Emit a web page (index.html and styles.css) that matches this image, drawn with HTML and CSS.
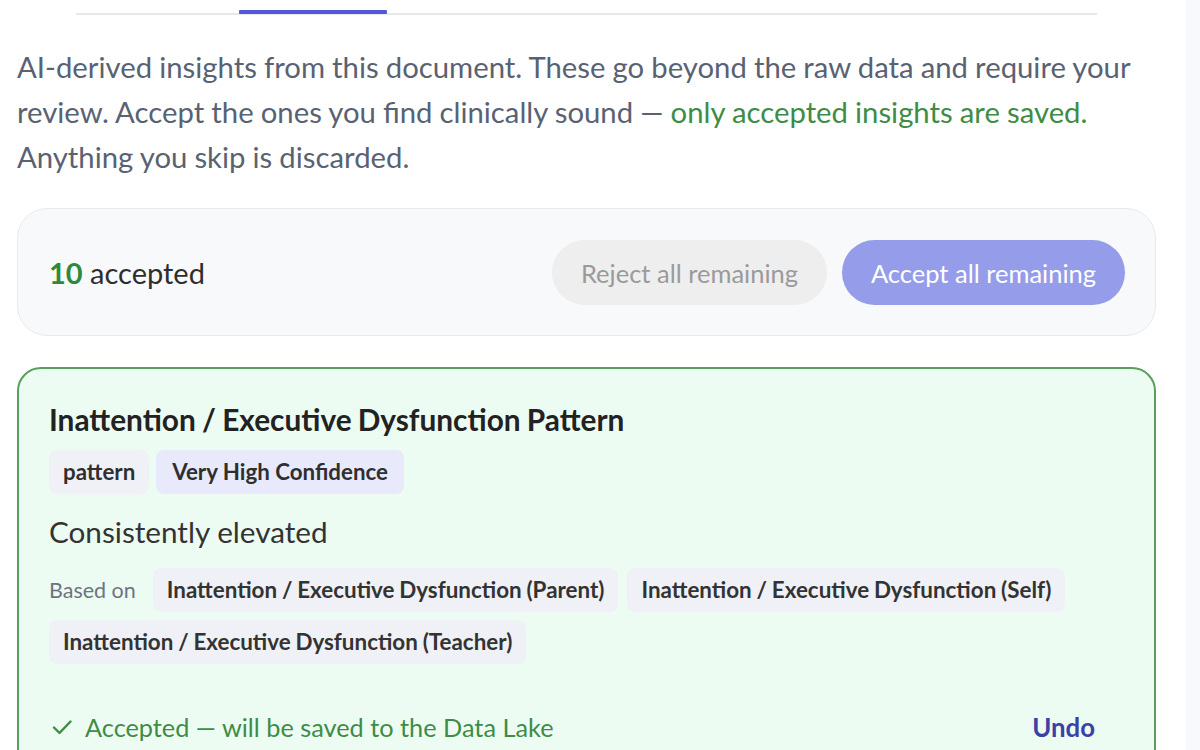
FILE: index.html
```html
<!DOCTYPE html>
<html lang="en">
<head>
<meta charset="utf-8">
<title>Insights review</title>
<link rel="stylesheet" href="styles.css">
</head>
<body>
<div class="page">
  <main class="main">
    <div class="tabs">
      <div class="tab"></div>
      <div class="tab active"></div>
    </div>
    <p class="intro">AI-derived insights from this document. These go beyond the raw data and require your review. Accept the ones you find clinically sound — <span class="ok">only accepted insights are saved.</span> Anything you skip is discarded.</p>

    <section class="summary">
      <div class="count"><strong>10</strong> accepted</div>
      <div class="actions">
        <button class="btn btn-reject">Reject all remaining</button>
        <button class="btn btn-accept">Accept all remaining</button>
      </div>
    </section>

    <article class="card">
      <h2 class="card-title">Inattention / Executive Dysfunction Pattern</h2>
      <div class="tags">
        <span class="tag">pattern</span>
        <span class="tag tag-conf">Very High Confidence</span>
      </div>
      <p class="finding">Consistently elevated</p>
      <div class="based">
        <span class="based-label">Based on</span>
        <span class="chip">Inattention / Executive Dysfunction (Parent)</span>
        <span class="chip">Inattention / Executive Dysfunction (Self)</span>
        <span class="chip">Inattention / Executive Dysfunction (Teacher)</span>
      </div>
      <div class="card-foot">
        <span class="status"><svg class="check" viewBox="0 0 20 16" width="20" height="16" aria-hidden="true"><path d="M2 8.5 L7.5 14 L18.5 2.5" fill="none" stroke="#3e8c45" stroke-width="2.4" stroke-linecap="round" stroke-linejoin="round"/></svg>Accepted — will be saved to the Data Lake</span>
        <button class="undo">Undo</button>
      </div>
    </article>
  </main>
  <aside class="rail"></aside>
</div>
</body>
</html>
```

FILE: styles.css
```css
* { box-sizing: border-box; }
html, body { margin: 0; padding: 0; background: #ffffff; }
body {
  font-family: Lato, "Noto Sans", "Liberation Sans", sans-serif;
  color: #2b2b2b;
  overflow: hidden;
  height: 750px;
}
.page {
  display: flex;
  height: 750px;
}
.main {
  flex: 1;
  padding: 0 30px 0 17px;
}
.rail {
  width: 14px;
  background: #f8f9fc;
}
.tabs {
  margin: 10px 59px 0 59px;
  height: 5px;
  border-bottom: 2px solid #e8e8ea;
  display: flex;
  padding-left: 163px;
}
.tab.active {
  width: 148px;
  height: 4px;
  background: #5557d8;
  border-radius: 1px;
}
.intro {
  margin: 29px 0 0 0;
  font-size: 29.3px;
  line-height: 45px;
  word-spacing: -0.4px;
  color: #596273;
}
.ok { color: #3e8c45; }

.summary {
  margin-top: 29px;
  border: 1px solid #e9eaed;
  background: #f8f9fb;
  border-radius: 30px;
  padding: 31px 30px 30px 31px;
  display: flex;
  align-items: center;
  justify-content: space-between;
}
.count {
  font-size: 29px;
  color: #2e2e2e;
}
.count strong { color: #2f8a38; font-weight: 700; }
.actions { display: flex; gap: 15px; }
.btn {
  font-family: inherit;
  font-size: 25.5px;
  height: 65px;
  border: none;
  border-radius: 33px;
  padding: 0;
}
.btn-reject { background: #eeeeee; color: #9a9a9a; width: 275px; }
.btn-accept { background: #959ce9; color: #ffffff; width: 283px; }

.card {
  margin-top: 31px;
  border: 2px solid #5a9e5e;
  border-radius: 24px;
  background: #edfcf3;
  padding: 33px 30px 40px 30px;
  height: 420px;
}
.card-title {
  margin: 0;
  font-size: 29.8px;
  line-height: 36px;
  font-weight: 700;
  word-spacing: -1px;
  color: #222222;
}
.tags { display: flex; gap: 7px; margin-top: 12px; }
.tag {
  background: #f0f1f7;
  border-radius: 8px;
  height: 44px;
  line-height: 44px;
  padding: 0 14px;
  font-size: 22.3px;
  font-weight: 700;
  color: #2f2f2f;
}
.tag-conf { background: #e8eafc; padding: 0 16px; }
.finding {
  margin: 18px 0 0 0;
  font-size: 29.7px;
  line-height: 40px;
  color: #333333;
}
.based {
  margin-top: 16px;
  display: flex;
  flex-wrap: wrap;
  align-items: center;
  gap: 8px 9px;
}
.based-label {
  font-size: 21.5px;
  color: #6d7380;
  margin-right: 8px;
}
.chip {
  background: #eff1f6;
  border-radius: 8px;
  height: 44px;
  line-height: 44px;
  padding: 0 14px;
  font-size: 22.4px;
  font-weight: 700;
  word-spacing: -0.6px;
  color: #333333;
}
.card-foot {
  margin-top: 48px;
  display: flex;
  justify-content: space-between;
  align-items: center;
  padding: 0 29px 0 3px;
}
.status {
  display: flex;
  align-items: center;
  font-size: 25.3px;
  color: #3e8c45;
}
.check { margin-right: 13px; }
.undo {
  background: none;
  border: none;
  padding: 0;
  font-family: inherit;
  font-size: 25.8px;
  font-weight: 700;
  color: #3c41a8;
}
```
